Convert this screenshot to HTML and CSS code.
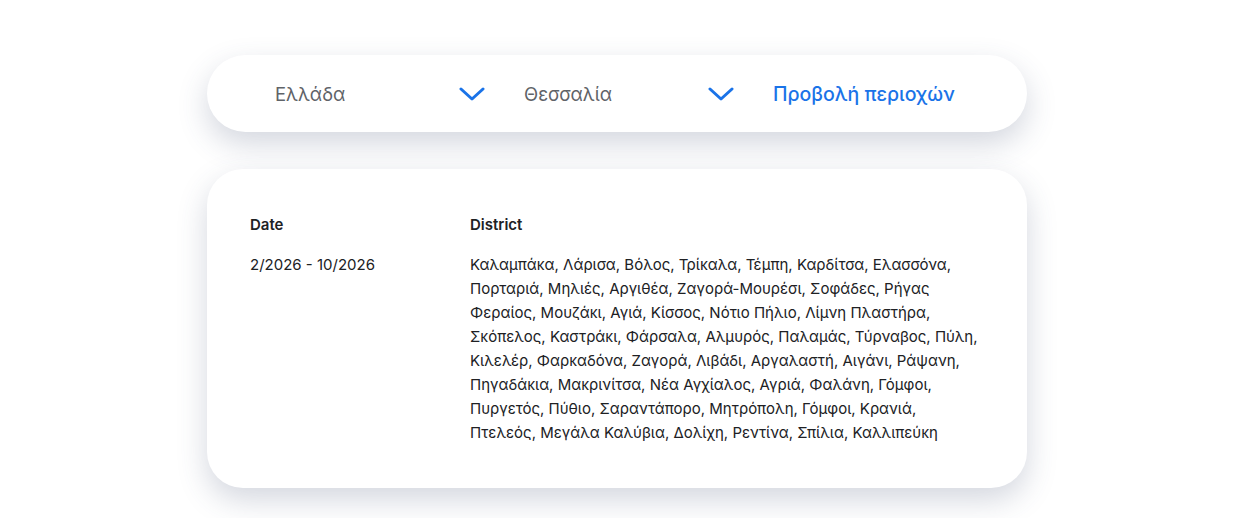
FILE: index.html
```html
<!DOCTYPE html>
<html lang="el">
<head>
    <meta charset="UTF-8">
    <meta name="viewport" content="width=device-width, initial-scale=1.0">
    <title>Περιοχές</title>
    <link rel="stylesheet" href="styles.css">
</head>
<body>
    <div class="page">
        <div class="filter-bar">
            <div class="select">
                <span class="select-value">Ελλάδα</span>
                <svg class="chevron" viewBox="0 0 26 16" width="26" height="16"><path d="M2 3 L13 13 L24 3" fill="none" stroke="#1a73e8" stroke-width="3" stroke-linecap="round" stroke-linejoin="round"/></svg>
            </div>
            <div class="select">
                <span class="select-value">Θεσσαλία</span>
                <svg class="chevron" viewBox="0 0 26 16" width="26" height="16"><path d="M2 3 L13 13 L24 3" fill="none" stroke="#1a73e8" stroke-width="3" stroke-linecap="round" stroke-linejoin="round"/></svg>
            </div>
            <a class="view-link" href="#">Προβολή περιοχών</a>
        </div>

        <div class="table-card">
            <div class="table">
                <div class="th">Date</div>
                <div class="th">District</div>
                <div class="td">2/2026 - 10/2026</div>
                <div class="td">Καλαμπάκα, Λάρισα, Βόλος, Τρίκαλα, Τέμπη, Καρδίτσα, Ελασσόνα, Πορταριά, Μηλιές, Αργιθέα, Ζαγορά-Μουρέσι, Σοφάδες, Ρήγας Φεραίος, Μουζάκι, Αγιά, Κίσσος, Νότιο Πήλιο, Λίμνη Πλαστήρα, Σκόπελος, Καστράκι, Φάρσαλα, Αλμυρός, Παλαμάς, Τύρναβος, Πύλη, Κιλελέρ, Φαρκαδόνα, Ζαγορά, Λιβάδι, Αργαλαστή, Αιγάνι, Ράψανη, Πηγαδάκια, Μακρινίτσα, Νέα Αγχίαλος, Αγριά, Φαλάνη, Γόμφοι, Πυργετός, Πύθιο, Σαραντάπορο, Μητρόπολη, Γόμφοι, Κρανιά, Πτελεός, Μεγάλα Καλύβια, Δολίχη, Ρεντίνα, Σπίλια, Καλλιπεύκη</div>
            </div>
        </div>
    </div>
</body>
</html>
```

FILE: styles.css
```css
body {
    margin: 0;
    padding-right: 4px;
    font-family: Inter, "Noto Sans", sans-serif;
    background-color: #fff;
    color: #202124;
}
.page {
    width: 820px;
    margin: 0 auto;
    padding: 55px 0 30px;
}
.filter-bar {
    display: flex;
    align-items: center;
    height: 77px;
    padding: 0 43px;
    background: #fff;
    border-radius: 39px;
    box-shadow: 0 12px 30px rgba(60, 72, 110, 0.22);
}
.select {
    width: 249px;
    box-sizing: border-box;
    padding: 0 14px 0 25px;
    display: flex;
    align-items: center;
    justify-content: space-between;
}
.select-value {
    font-size: 18.5px;
    color: #5f6368;
}
.chevron {
    display: block;
}
.view-link {
    margin-left: 25px;
    font-size: 19.5px;
    font-weight: 500;
    color: #1a73e8;
    text-decoration: none;
}
.table-card {
    margin-top: 37px;
    padding: 44px 43px 43px;
    background: #fff;
    border-radius: 36px;
    box-shadow: 0 12px 30px rgba(60, 72, 110, 0.22);
}
.table {
    display: grid;
    grid-template-columns: 220px 1fr;
    row-gap: 16px;
    font-size: 15px;
    line-height: 24px;
}
.th {
    font-weight: 600;
}
.td {
    color: #202124;
}
```
